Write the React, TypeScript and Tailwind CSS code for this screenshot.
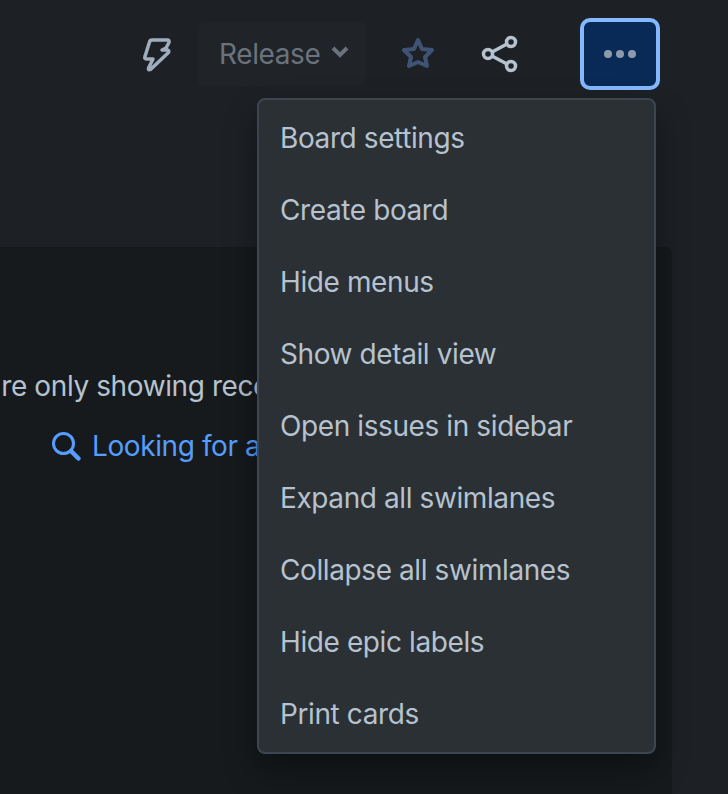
const menuItems = [
  'Board settings',
  'Create board',
  'Hide menus',
  'Show detail view',
  'Open issues in sidebar',
  'Expand all swimlanes',
  'Collapse all swimlanes',
  'Hide epic labels',
  'Print cards',
];

export default function App() {
  return (
    <div className="relative h-[794px] w-[728px] overflow-hidden bg-[#1d2125] font-['Inter',sans-serif] tracking-[-0.4px]">
      {/* toolbar */}
      <div className="flex h-[247px] items-start pl-[138px] pt-[18px]">
        <div className="mt-[4px] flex h-[64px] w-[36px] items-center justify-center">
          <svg width="32" height="38" viewBox="0 0 32 38" fill="none" stroke="#9fadbc" strokeWidth="3.5" strokeLinejoin="round" strokeLinecap="round">
            <path d="M12 5 H27.5 Q29.5 5 29 7.5 L26 13 L22 15 H27.5 Q29.5 15.5 28.5 17.5 L10.5 34.5 Q8 35.5 8.5 33 L13 24 H6.5 Q4 24 5 21.5 L9.5 7 Q10 5 12 5 Z" />
          </svg>
        </div>
        <div className="ml-[24px] mt-[4px] flex h-[64px] w-[168px] items-center rounded-[6px] bg-[#202428] pl-[21px] text-[28px] text-[#6a737d]">
          Release
          <svg className="ml-[11px] -mt-[4px]" width="18" height="12" viewBox="0 0 18 12" fill="none" stroke="#6a737d" strokeWidth="4">
            <path d="M2 2 L9 9 L16 2" />
          </svg>
        </div>
        <div className="ml-[34px] mt-[16px] flex h-[38px] w-[36px] items-center justify-center">
          <svg width="34" height="32" viewBox="0 0 34 32" fill="none" stroke="#3f5474" strokeWidth="4" strokeLinejoin="round">
            <path d="M17 3 L21 12 L31 13 L24 20 L26 29 L17 25 L8 29 L10 20 L3 13 L13 12 Z" />
          </svg>
        </div>
        <div className="ml-[45px] mt-[17px] flex h-[38px] w-[38px] items-center justify-center">
          <svg width="38" height="38" viewBox="0 0 38 38" fill="none" stroke="#b6c2cf" strokeWidth="3.5">
            <circle cx="7" cy="19" r="4.5" />
            <circle cx="30" cy="7" r="4.5" />
            <circle cx="30" cy="31" r="4.5" />
            <path d="M11 17 L26 9 M11 21 L26 29" />
          </svg>
        </div>
        <button className="ml-[61px] flex h-[72px] w-[80px] items-center justify-center gap-[4px] rounded-[10px] border-4 border-[#85b8ff] bg-[#092957]">
          <span className="h-[8px] w-[8px] rounded-full bg-[#8c9bab]" />
          <span className="h-[8px] w-[8px] rounded-full bg-[#8c9bab]" />
          <span className="h-[8px] w-[8px] rounded-full bg-[#8c9bab]" />
        </button>
      </div>

      {/* board panel */}
      <div className="h-[547px] w-[672px] overflow-hidden rounded-tr-[6px] bg-[#161a1d] pt-[121px] text-[28px]">
        <p className="-ml-[48px] whitespace-nowrap leading-[36px] text-[#b6c2cf]">We're only showing recently updated issues.</p>
        <div className="ml-[50px] mt-[24px] flex items-center whitespace-nowrap leading-[36px] text-[#579dff]">
          <svg className="mr-[10px]" width="32" height="32" viewBox="0 0 32 32" fill="none" stroke="#579dff" strokeWidth="3" strokeLinecap="round">
            <circle cx="13.5" cy="13.5" r="10" />
            <path d="M21 21 L28.5 28.5" strokeWidth="4.5" />
          </svg>
          Looking for an older issue?
        </div>
      </div>

      {/* dropdown menu */}
      <div className="absolute left-[257px] top-[98px] w-[399px] rounded-[8px] border-2 border-[#3c4650] bg-[#2a3034] py-[2px] shadow-[0_16px_32px_rgba(3,4,4,0.4)]">
        {menuItems.map(item => (
          <div key={item} className="flex h-[72px] items-center pl-[21px] text-[28px] text-[#b6c2cf]">
            {item}
          </div>
        ))}
      </div>
    </div>
  );
}
